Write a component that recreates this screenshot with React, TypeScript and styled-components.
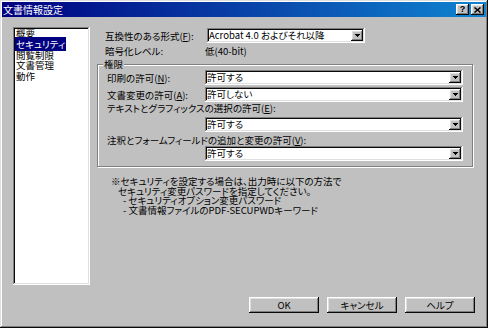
import React from 'react'
import styled, { createGlobalStyle } from 'styled-components'

const GlobalStyle = createGlobalStyle`
  html, body {
    margin: 0;
    padding: 0;
    background: #c0c0c0;
  }
  body {
    font-family: "Noto Sans CJK JP", "Liberation Sans", sans-serif;
    font-size: 9.5px;
    font-feature-settings: "palt";
    color: #000;
  }
  * {
    box-sizing: border-box;
  }
`

const raised = `
  box-shadow: inset -1px -1px #0a0a0a, inset 1px 1px #ffffff,
    inset -2px -2px #808080, inset 2px 2px #dfdfdf;
`
const sunken = `
  box-shadow: inset -1px -1px #ffffff, inset 1px 1px #808080,
    inset -2px -2px #dfdfdf, inset 2px 2px #0a0a0a;
`

const Window = styled.div`
  width: 488px;
  height: 328px;
  display: flex;
  flex-direction: column;
  padding: 2px;
  background: #c0c0c0;
  box-shadow: inset -1px -1px #0a0a0a, inset 1px 1px #dfdfdf,
    inset -2px -2px #808080, inset 2px 2px #ffffff;
`

const TitleBar = styled.div`
  height: 15px;
  display: flex;
  align-items: center;
  padding: 0 2px 0 1px;
  background: linear-gradient(90deg, #000080, #1084d0);
  color: #fff;
`

const Title = styled.span`
  flex: 1;
  font-size: 10px;
  line-height: 12px;
`

const CaptionButtons = styled.div`
  display: flex;
  gap: 2px;
`

const CaptionButton = styled.div`
  width: 13px;
  height: 11px;
  display: flex;
  align-items: center;
  justify-content: center;
  background: #c0c0c0;
  color: #000;
  font-family: "Liberation Sans", sans-serif;
  font-weight: bold;
  font-size: 9px;
  line-height: 9px;
  ${raised}
`

const Body = styled.div`
  height: 268px;
  display: flex;
  align-items: flex-start;
  gap: 7px;
  padding: 10px 0 0 11px;
`

const ListBox = styled.ul`
  width: 77px;
  height: 258px;
  margin: 0;
  padding: 1px 2px 0;
  list-style: none;
  background: #fff;
  ${sunken}
`

const ListItem = styled.li`
  height: 10.75px;
  line-height: 10.75px;
  white-space: nowrap;
`

const ItemText = styled.span<{ $selected?: boolean }>`
  padding: 0 1px;
  background: ${p => (p.$selected ? '#000080' : 'transparent')};
  color: ${p => (p.$selected ? '#fff' : '#000')};
`

const Panel = styled.div`
  width: 376px;
  display: flex;
  flex-direction: column;
  margin-top: 1px;
`

const TopFields = styled.div`
  display: flex;
  flex-direction: column;
  gap: 2px;
  padding-left: 8px;
`

const FieldRow = styled.div<{ $height?: number; $gap?: number }>`
  height: ${p => p.$height ?? 15}px;
  margin-top: ${p => p.$gap ?? 0}px;
  display: flex;
  align-items: center;
`

const Label = styled.span<{ $width: number }>`
  width: ${p => p.$width}px;
  flex: none;
  line-height: 12px;
  white-space: nowrap;
`

const Value = styled.span`
  line-height: 12px;
`

const GroupBox = styled.div`
  position: relative;
  margin-top: 7px;
  padding: 5px 9px 5px 9px;
  border: 1px solid #808080;
  box-shadow: inset 1px 1px #ffffff, 1px 1px #ffffff;
  display: flex;
  flex-direction: column;
`

const Legend = styled.span`
  position: absolute;
  top: -7px;
  left: 5px;
  padding: 0 1px;
  line-height: 12px;
  background: #c0c0c0;
`

const LabelLine = styled.div<{ $gap: number }>`
  height: 12px;
  line-height: 12px;
  margin-top: ${p => p.$gap}px;
  white-space: nowrap;
`

const ComboIndent = styled.div<{ $gap: number }>`
  margin-top: ${p => p.$gap}px;
  padding-left: 98px;
`

const Combo = styled.div<{ $width: number }>`
  width: ${p => p.$width}px;
  height: 15px;
  flex: none;
  display: flex;
  align-items: center;
  padding: 2px 2px 2px 2px;
  background: #fff;
  ${sunken}
`

const ComboText = styled.span`
  flex: 1;
  line-height: 11px;
  white-space: nowrap;
`

const ComboButton = styled.span`
  width: 12px;
  height: 11px;
  flex: none;
  display: flex;
  align-items: center;
  justify-content: center;
  background: #c0c0c0;
  ${raised}
`

const Note = styled.div`
  margin-top: 10px;
  padding-left: 14px;
`

const NoteLine = styled.div<{ $indent: number }>`
  padding-left: ${p => p.$indent}px;
  line-height: 9.5px;
  white-space: nowrap;
`

const Footer = styled.div`
  display: flex;
  justify-content: flex-end;
  gap: 8px;
  padding: 12px 11px 0 0;
`

const PushButton = styled.div`
  width: 70px;
  height: 16px;
  display: flex;
  align-items: center;
  justify-content: center;
  line-height: 12px;
  background: #c0c0c0;
  ${raised}
`

function Arrow() {
  return (
    <svg width="5" height="3" viewBox="0 0 5 3">
      <path d="M0 0h5v1H0zM1 1h3v1H1zM2 2h1v1H2z" fill="#000" />
    </svg>
  )
}

function CloseGlyph() {
  return (
    <svg width="7" height="6" viewBox="0 0 7 6">
      <path d="M0.5 0.5L6.5 5.5M6.5 0.5L0.5 5.5" stroke="#000" strokeWidth="1.5" />
    </svg>
  )
}

function Select({ width, value }: { width: number; value: string }) {
  return (
    <Combo $width={width}>
      <ComboText>{value}</ComboText>
      <ComboButton>
        <Arrow />
      </ComboButton>
    </Combo>
  )
}

const pages = ['概要', 'セキュリティ', '閲覧制限', '文書管理', '動作']

export default function App() {
  return (
    <>
      <GlobalStyle />
      <Window>
        <TitleBar>
          <Title>文書情報設定</Title>
          <CaptionButtons>
            <CaptionButton>?</CaptionButton>
            <CaptionButton>
              <CloseGlyph />
            </CaptionButton>
          </CaptionButtons>
        </TitleBar>
        <Body>
          <ListBox>
            {pages.map(p => (
              <ListItem key={p}>
                <ItemText $selected={p === 'セキュリティ'}>{p}</ItemText>
              </ListItem>
            ))}
          </ListBox>
          <Panel>
            <TopFields>
              <FieldRow>
                <Label $width={102}>互換性のある形式(<u>F</u>):</Label>
                <Select width={158} value="Acrobat 4.0 およびそれ以降" />
              </FieldRow>
              <FieldRow $height={12}>
                <Label $width={100}>暗号化レベル:</Label>
                <Value>低(40-bit)</Value>
              </FieldRow>
            </TopFields>
            <GroupBox>
              <Legend>権限</Legend>
              <FieldRow>
                <Label $width={98}>印刷の許可(<u>N</u>):</Label>
                <Select width={258} value="許可する" />
              </FieldRow>
              <FieldRow $gap={2}>
                <Label $width={98}>文書変更の許可(<u>A</u>):</Label>
                <Select width={258} value="許可しない" />
              </FieldRow>
              <LabelLine $gap={0}>テキストとグラフィックスの選択の許可(<u>E</u>):</LabelLine>
              <ComboIndent $gap={3}>
                <Select width={258} value="許可する" />
              </ComboIndent>
              <LabelLine $gap={2}>注釈とフォームフィールドの追加と変更の許可(<u>V</u>):</LabelLine>
              <ComboIndent $gap={0}>
                <Select width={258} value="許可する" />
              </ComboIndent>
            </GroupBox>
            <Note>
              <NoteLine $indent={0}>※セキュリティを設定する場合は、出力時に以下の方法で</NoteLine>
              <NoteLine $indent={7}>セキュリティ変更パスワードを指定してください。</NoteLine>
              <NoteLine $indent={12}>- セキュリティオプション変更パスワード</NoteLine>
              <NoteLine $indent={12}>- 文書情報ファイルのPDF-SECUPWDキーワード</NoteLine>
            </Note>
          </Panel>
        </Body>
        <Footer>
          <PushButton>OK</PushButton>
          <PushButton>キャンセル</PushButton>
          <PushButton>ヘルプ</PushButton>
        </Footer>
      </Window>
    </>
  )
}
